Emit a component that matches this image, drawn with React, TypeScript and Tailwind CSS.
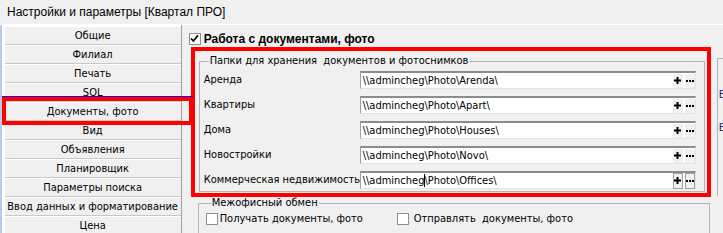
import React from 'react';

const NAV = [
  'Общие',
  'Филиал',
  'Печать',
  'SQL',
  'Документы, фото',
  'Вид',
  'Объявления',
  'Планировщик',
  'Параметры поиска',
  'Ввод данных и форматирование',
  'Цена',
];

const FOLDERS = [
  { label: 'Аренда', path: '\\\\admincheg\\Photo\\Arenda\\' },
  { label: 'Квартиры', path: '\\\\admincheg\\Photo\\Apart\\' },
  { label: 'Дома', path: '\\\\admincheg\\Photo\\Houses\\' },
  { label: 'Новостройки', path: '\\\\admincheg\\Photo\\Novo\\' },
  { label: 'Коммерческая недвижимость', path: '\\\\admincheg\\Photo\\Offices\\' },
];

const Check = ({ checked = false }: { checked?: boolean }) => (
  <span className="w-[12px] h-[12px] shrink-0 border border-[#8e8f8f] bg-white flex items-center justify-center">
    {checked && (
      <svg width="9" height="9" viewBox="0 0 9 9">
        <path d="M1 4.5 L3.4 7 L8 1.2" stroke="#000" strokeWidth="1.8" fill="none" />
      </svg>
    )}
  </span>
);

const PlusIcon = () => (
  <svg width="7" height="7" viewBox="0 0 7 7">
    <rect x="0" y="2.5" width="7" height="2" fill="#000" />
    <rect x="2.5" y="0" width="2" height="7" fill="#000" />
  </svg>
);

const DotsIcon = () => (
  <svg width="8" height="2" viewBox="0 0 8 2">
    <rect x="0" y="0" width="2" height="2" fill="#000" />
    <rect x="3" y="0" width="2" height="2" fill="#000" />
    <rect x="6" y="0" width="2" height="2" fill="#000" />
  </svg>
);

const PathInput = ({ path, active }: { path: string; active: boolean }) => {
  // caret sits after "admincheg" on the focused row
  const head = path.slice(0, 11);
  const tail = path.slice(11);
  const btn = active
    ? 'h-[16px] border border-[#a0a0a0] bg-[#f0f0f0]'
    : 'h-[14px] bg-[#f0f0f0]';
  return (
    <div className="w-[336px] h-[18px] bg-white border-t-2 border-t-[#8c8c8c] border-l border-l-[#a0a0a0] border-b border-b-[#e3e3e3] border-r border-r-[#e3e3e3] flex items-center pl-[2px]">
      <span className="flex-1 whitespace-nowrap leading-none">
        {head}
        {active && <span className="inline-block w-[1px] h-[13px] bg-black align-middle -mx-[0.5px]" />}
        {tail}
      </span>
      <span className={`${btn} w-[10px] flex items-center justify-center`}>
        <PlusIcon />
      </span>
      <span className={`${btn} w-[10px] ml-[2px] flex items-center justify-center`}>
        <DotsIcon />
      </span>
    </div>
  );
};

export default function App() {
  return (
    <div className="relative w-[723px] h-[233px] overflow-hidden bg-[#f0f0f0] text-black text-[11px] font-['DejaVu_Sans_Condensed','Liberation_Sans',sans-serif]">
      {/* Title */}
      <div className="h-[25px] pl-[7px] flex items-center text-[12px] font-['Liberation_Sans',Arial,sans-serif] border-b border-white">
        Настройки и параметры [Квартал ПРО]
      </div>

      <div className="flex">
        {/* Left nav */}
        <div className="w-[3px] bg-[#b4cdea] self-stretch" />
        <div className="w-[181px] h-[208px] bg-white border-r border-[#a0a0a0] pl-[3px] pt-[2px]">
          {NAV.map((item) => (
            <div
              key={item}
              className="w-[176px] h-[18px] mb-[1px] bg-[#f0f0f0] border-b border-[#c8c8c8] flex items-center justify-center leading-none whitespace-nowrap"
            >
              {item}
            </div>
          ))}
        </div>

        {/* Right content */}
        <div className="w-[529px] pl-[7px] pt-[7px]">
          <div className="h-[13px] flex items-center gap-[3px]">
            <Check checked />
            <span className="font-bold leading-none text-[12px] font-['Liberation_Sans',Arial,sans-serif]">
              Работа с документами, фото
            </span>
          </div>

          <div className="mt-[2px] ml-[2px] w-[520px] border-4 border-[#ff0000] pt-[3px] pl-[4px] pr-[2px] pb-[1px]">
            <fieldset className="border border-[#b4b4b4] pl-[4px] pr-[8px] pt-[3px] pb-[2px]">
              <legend className="ml-[5px] leading-[14px] px-[1px]">
                Папки для хранения&nbsp; документов и фотоснимков
              </legend>
              <div className="flex flex-col gap-[7px]">
                {FOLDERS.map((f, i) => (
                  <div key={f.label} className="flex items-center h-[18px]">
                    <span className="w-[156px] whitespace-nowrap">{f.label}</span>
                    <PathInput path={f.path} active={i === FOLDERS.length - 1} />
                  </div>
                ))}
              </div>
            </fieldset>
          </div>

          <fieldset className="-mt-[1px] ml-[9px] w-[512px] h-[60px] border border-[#b4b4b4] pl-[7px] pt-[3px]">
            <legend className="ml-[5px] leading-[14px] px-[1px]">Межофисный обмен</legend>
            <div className="flex items-center h-[12px]">
              <div className="w-[191px] flex items-center gap-[2px]">
                <Check />
                <span className="whitespace-nowrap">Получать документы, фото</span>
              </div>
              <div className="flex items-center gap-[5px]">
                <Check />
                <span className="whitespace-nowrap">Отправлять&nbsp; документы, фото</span>
              </div>
            </div>
          </fieldset>
        </div>

        {/* Partially visible group on the right */}
        <div className="ml-[6px] mt-[33px] w-[10px] h-[138px] border-l border-t border-[#b4b4b4] pl-[1px] overflow-hidden text-[#1a237e] leading-none">
          <div className="mt-[30px]">Б</div>
          <div className="mt-[22px]">Б</div>
        </div>
      </div>

      {/* Annotation around the selected nav item */}
      <div className="absolute top-[96px] left-[2px] w-[191px] h-[1px] bg-[#1010e0]" />
      <div className="absolute top-[97px] left-[2px] w-[191px] h-[28px] border-4 border-[#ff0000]" />
    </div>
  );
}
